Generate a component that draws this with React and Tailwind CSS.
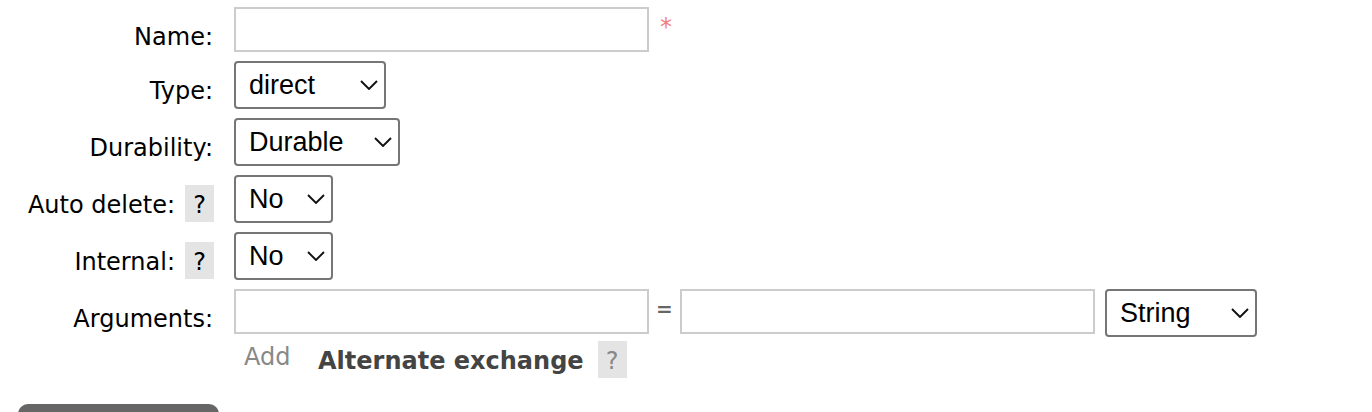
import React from "react";

const textBox =
  "h-[45px] w-[415px] min-w-0 border-2 border-[#cccccc] bg-white px-2 text-2xl text-black outline-none focus:border-[#888888]";

function Help({ topic, muted = false }) {
  return (
    <button
      type="button"
      aria-label={`Help: ${topic}`}
      className={`h-[37px] w-[29px] shrink-0 bg-[#e4e4e4] text-center leading-[40px] ${
        muted ? "text-[#888888]" : "text-black"
      }`}
    >
      ?
    </button>
  );
}

function Select({ id, label, width, options }) {
  return (
    <div className={`relative h-12 shrink-0 ${width}`}>
      <select
        id={id}
        aria-label={label}
        className="h-full w-full appearance-none rounded border-2 border-[#767676] bg-white pl-[13px] pr-8 pt-[2px] font-['Liberation_Sans',Arial,sans-serif] text-[27px] text-black"
      >
        {options.map((option) => (
          <option key={option}>{option}</option>
        ))}
      </select>
      <svg
        aria-hidden="true"
        viewBox="0 0 18 10"
        className="pointer-events-none absolute right-2 top-[19px] h-[10px] w-[18px]"
        fill="none"
        stroke="#111111"
        strokeWidth="1.9"
      >
        <path d="M1 1L9 9L17 1" />
      </svg>
    </div>
  );
}

function Row({ id, label, help = false, height = "h-12", children }) {
  return (
    <div className={`flex items-start ${height}`}>
      <div className="flex w-[214px] shrink-0 justify-end gap-[10px] pt-[10px] leading-[40px]">
        <label htmlFor={id} className={help ? "" : "pr-px"}>
          {label}:
        </label>
        {help && <Help topic={label} />}
      </div>
      <div className="flex min-w-0 items-start pl-5">{children}</div>
    </div>
  );
}

export default function App() {
  return (
    <form
      onSubmit={(event) => event.preventDefault()}
      className="max-h-screen overflow-hidden bg-white pt-[7px] font-[Verdana,'DejaVu_Sans',sans-serif] text-2xl text-black"
    >
      <div className="flex flex-col gap-[9px]">
        <Row id="name" label="Name" height="h-[45px]">
          <input id="name" type="text" required className={`${textBox} shadow-none`} />
          <span className="pl-[11px] leading-[40px] text-[#f08080]">*</span>
        </Row>
        <Row id="type" label="Type">
          <Select id="type" width="w-[152px]" options={["direct", "fanout", "headers", "topic"]} />
        </Row>
        <Row id="durability" label="Durability">
          <Select id="durability" width="w-[166px]" options={["Durable", "Transient"]} />
        </Row>
        <Row id="auto-delete" label="Auto delete" help>
          <Select id="auto-delete" width="w-[99px]" options={["No", "Yes"]} />
        </Row>
        <Row id="internal" label="Internal" help>
          <Select id="internal" width="w-[99px]" options={["No", "Yes"]} />
        </Row>
        <Row id="argument-key" label="Arguments">
          <input id="argument-key" type="text" className={textBox} />
          <span className="w-[31px] text-center text-xl font-bold leading-[40px] text-[#666666]">=</span>
          <input type="text" aria-label="Argument value" className={textBox} />
          <div className="pl-[10px]">
            <Select
              label="Argument type"
              width="w-[152px]"
              options={["String", "Number", "Boolean", "List"]}
            />
          </div>
        </Row>
      </div>
      <div className="flex items-start pl-[244px] pt-1">
        <span className="w-[74px] leading-8 text-[#888888]">Add</span>
        <button type="button" className="font-bold leading-[40px] text-[#444444]">
          Alternate exchange
        </button>
        <div className="pl-[14px]">
          <Help topic="Alternate exchange" muted />
        </div>
      </div>
      <div className="pl-[18px] pt-[23px]">
        <button
          type="submit"
          aria-label="Add exchange"
          className="block h-14 w-[201px] rounded-[10px] bg-[#666666]"
        />
      </div>
    </form>
  );
}
